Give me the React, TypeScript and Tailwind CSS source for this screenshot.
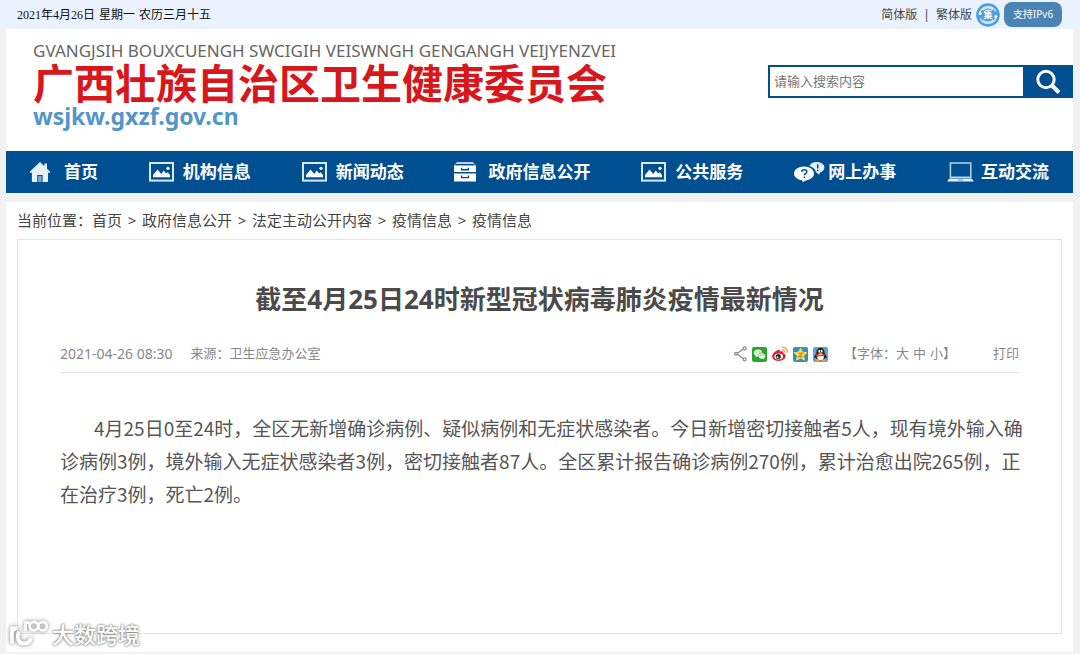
import type { ReactNode } from "react";

function HomeIcon() {
  return (
    <svg width="20" height="20" viewBox="0 0 20 20" aria-hidden="true">
      <path fill="#e6f1fb" d="M10 0 0 9.6v1.2h1.9V20h5.3v-7h5.4v7h5.4v-9.2H20V9.6l-3-2.9V1.6h-2.6v2.6z" />
      <path fill="#7fa9cf" d="M8.2 14h3.4v6H8.2z" />
    </svg>
  );
}

function PictureIcon() {
  return (
    <svg width="25" height="20" viewBox="0 0 25 20" aria-hidden="true">
      <rect x="1" y="1" width="23" height="17.6" fill="none" stroke="#d7e8f7" strokeWidth="2" />
      <path fill="#fff" d="M4 15.200v-2.200l4.600-5.600 3.600 4.600 2.600-3.400 2.200 3 1.600-1.400 2.400 2.800v2.200z" />
      <circle cx="19" cy="6.300" r="1.600" fill="#fff" />
    </svg>
  );
}

function CabinetIcon() {
  return (
    <svg width="22" height="20" viewBox="0 0 22 20" aria-hidden="true">
      <path fill="#b9d3ea" d="M3 0h16l3 3.600H0z" />
      <path fill="#fff" d="M0 3.600h22V10H0zM0 11.400h22V19.400H0z" />
      <path fill="none" stroke="#004f90" strokeWidth="1.200" d="M1.500 2.600h19" />
      <path fill="none" stroke="#004f90" strokeWidth="1.400" d="M7.600 5.800v2h6.800v-2M7.600 13.600v2h6.800v-2" />
    </svg>
  );
}

function ChatIcon() {
  return (
    <svg width="31" height="20" viewBox="0 0 31 20" aria-hidden="true">
      <path fill="#e6f1fb" d="M22.600 0c4.400 0 7.800 2.400 7.800 5.500 0 2.300-1.800 4.100-4.400 5l-.8 2.300-3.200-2.600c-.6-3.300-3.200-5.400-6.600-6.300C16.600 1.600 19.400 0 22.600 0z" />
      <path fill="#fff" d="M10 4.600c5.600 0 10 3 10 7 0 3.500-3.300 6.200-7.900 6.800L8.700 20l-.6-1.700C3.400 17.700 0 15 0 11.600c0-4 4.500-7 10-7z" />
      <path fill="none" stroke="#004f90" strokeWidth="1.500" d="M7.600 9.800c.2-1.500 1.200-2 2.700-2 1.600 0 2.600.8 2.600 2 0 1.500-2.500 1.600-2.500 3.400M10.400 14.400v1.500M23.700 2.200v4.400M23.700 7.700v1.300" />
    </svg>
  );
}

function LaptopIcon() {
  return (
    <svg width="27" height="20" viewBox="0 0 27 20" aria-hidden="true">
      <path fill="none" stroke="#b9d3ea" strokeWidth="1.500" d="M3.400 15.200V1h20.400v14.200z" />
      <path fill="#e6f1fb" d="M2.400 16.400h22.200l2.400 3.200H0z" />
      <path fill="#5f92c0" d="M11 17.400h5l.6 1.200h-6.200z" />
    </svg>
  );
}

const navItems: { label: string; icon: ReactNode }[] = [
  { label: "首页", icon: <HomeIcon /> },
  { label: "机构信息", icon: <PictureIcon /> },
  { label: "新闻动态", icon: <PictureIcon /> },
  { label: "政府信息公开", icon: <CabinetIcon /> },
  { label: "公共服务", icon: <PictureIcon /> },
  { label: "网上办事", icon: <ChatIcon /> },
  { label: "互动交流", icon: <LaptopIcon /> },
];

const crumbs = ["首页", "政府信息公开", "法定主动公开内容", "疫情信息", "疫情信息"];

function CollectionBadge() {
  return (
    <svg width="24" height="24" viewBox="0 0 24 24" aria-label="集约化平台">
      <circle cx="12" cy="12" r="11.800" fill="#4f9ddd" />
      <path fill="none" stroke="#cfe6f8" strokeWidth="1.400" d="M3.800 9.200a8.800 8.800 0 0 1 16-.8M20.200 14.800a8.800 8.800 0 0 1-16 .8M6.600 7.200a7 7 0 0 1 10.400-.4M17.400 16.800a7 7 0 0 1-10.400.4" />
      <circle cx="4.200" cy="10.400" r="1.500" fill="#fff" />
      <circle cx="19.800" cy="13.600" r="1.500" fill="#fff" />
      <text x="12" y="15.400" textAnchor="middle" fontSize="9" fontWeight="700" fill="#fff">集</text>
    </svg>
  );
}

function ShareIcon() {
  return (
    <svg width="13" height="16" viewBox="0 0 13 16" fill="none" stroke="#888" strokeWidth="1.200" aria-hidden="true">
      <path d="M9.600 3 2.600 7.800l7 5" />
      <circle cx="10.600" cy="2.400" r="1.500" fill="#fff" />
      <circle cx="2" cy="7.800" r="1.400" fill="#fff" />
      <circle cx="10.600" cy="13.400" r="1.500" fill="#fff" />
    </svg>
  );
}

function WechatIcon() {
  return (
    <svg width="15" height="15" viewBox="0 0 15 15" aria-hidden="true">
      <rect width="15" height="15" rx="2" fill="#2ba62b" />
      <path fill="#fff" d="M6 2.600c2.300 0 4 1.300 4.100 3-2.500 0-4.200 1.500-4.100 3.600l-1 .1-1.500.9.300-1.400C2.700 8.200 2 7.200 2 6c0-1.900 1.800-3.400 4-3.400z" />
      <path fill="#e9f8e6" d="M9.800 6.200c1.900 0 3.400 1.200 3.400 2.800 0 .9-.5 1.700-1.200 2.200l.3 1.200-1.300-.7c-2.500.5-4.600-.8-4.600-2.700 0-1.600 1.500-2.800 3.400-2.800z" />
      <g fill="#2ba62b"><circle cx="4.700" cy="5" r=".6" /><circle cx="7.300" cy="5" r=".6" /><circle cx="8.700" cy="8.300" r=".5" /><circle cx="11" cy="8.300" r=".5" /></g>
    </svg>
  );
}

function WeiboIcon() {
  return (
    <svg width="16" height="16" viewBox="0 0 16 16" aria-hidden="true">
      <path fill="#d8222b" d="M6 4c1.300-.4 2.300.1 1.900 1.700 2-.8 3.800-.4 3.200 1.600 1.900.5 2.700 1.500 2.500 3-.3 2.700-3.300 4.700-7 4.700-3.800 0-6.400-1.800-6.400-4.400C.2 8 3.400 4.700 6 4z" />
      <ellipse cx="6.700" cy="10.400" rx="4.300" ry="3" fill="#fff" />
      <circle cx="6.300" cy="10.600" r="2.500" fill="#222" />
      <circle cx="5.600" cy="11.200" r=".9" fill="#fff" />
      <path fill="none" stroke="#f2a65a" strokeWidth="1.500" d="M10 1.300c3.300-.6 5.700 2 4.800 5.300M10.300 3.900c1.500-.2 2.500.8 2.200 2.300" />
    </svg>
  );
}

function QzoneIcon() {
  return (
    <svg width="15" height="15" viewBox="0 0 15 15" aria-hidden="true">
      <rect width="15" height="15" rx="2" fill="#3190cc" />
      <path fill="#fddc4a" stroke="#fddc4a" strokeLinejoin="round" d="m7.500 1.200 1.900 4 4.400.5-3.200 3 .9 4.400-4-2.200-4 2.200.9-4.400-3.200-3 4.400-.5z" />
      <path fill="none" stroke="#d9741a" strokeWidth="1.100" d="M5.400 6.300h4L5.600 9.600h4" />
    </svg>
  );
}

function QQIcon() {
  return (
    <svg width="15" height="15" viewBox="0 0 15 15" aria-hidden="true">
      <rect width="15" height="15" rx="2" fill="#5aa5da" />
      <path fill="#1f1f23" d="M7.500.8c2.500 0 4 1.700 4 4.100 0 1 .3 1.600.9 2.500 1 1.300 1.500 2.700 1.200 3.600-.3.500-.8.200-1.400-.4-.3 1.700-2 3-4.700 3s-4.400-1.300-4.700-3c-.6.600-1.100.9-1.400.4-.3-.9.200-2.300 1.200-3.600.6-.9.900-1.500.9-2.500C3.500 2.500 5 .8 7.500.8z" />
      <ellipse cx="7.500" cy="10" rx="3.300" ry="3.200" fill="#fff" />
      <ellipse cx="6.300" cy="4" rx=".9" ry="1.200" fill="#fff" />
      <ellipse cx="8.700" cy="4" rx=".9" ry="1.200" fill="#fff" />
      <path fill="#f8a81b" d="M4.600 5.800c1.800-.7 4-.7 5.800 0-1.200 1.300-4.600 1.300-5.800 0zM2.500 12.600c1.400-.7 3.400-.3 4.300 1.200-1.200.9-3.800.8-4.300-1.200zM12.500 12.600c-1.400-.7-3.400-.3-4.300 1.200 1.200.9 3.800.8 4.300-1.200z" />
      <path fill="#e3342b" d="M3.300 6.800c2.500 1.200 5.900 1.200 8.400 0l.3 1.400c-2.300 1.200-5.400 1.300-7.200.7l-.2 1.700-1.300-.3z" />
    </svg>
  );
}

function Watermark() {
  return (
    <div className="pointer-events-none absolute bottom-1.5 left-2 flex items-end gap-0.5">
      <svg width="42" height="30" viewBox="0 0 42 30" fill="none" className="drop-shadow-[0_0_2px_#777]" aria-hidden="true">
        <g stroke="#fff">
          <path strokeWidth="3.600" d="M4 8.500v17M4 14.500c.6-3 2.600-4.400 5.600-4.400" />
          <path strokeWidth="3.600" d="M11 13.500c-3 7 0 12 5 12 3.800 0 6.200-2.200 7-5.500" />
          <path strokeWidth="2.600" d="M17.500 3.500v9.500M17.500 8c.4-2.600 1.800-3.600 4-3.600" />
          <circle cx="25.800" cy="8.200" r="4.200" strokeWidth="2.600" />
          <circle cx="34.600" cy="8.200" r="4.200" strokeWidth="2.600" />
        </g>
      </svg>
      <span className="text-[22px] leading-7 font-medium text-white [text-shadow:0_0_3px_#777,0_0_2px_#888]">大数跨境</span>
    </div>
  );
}

export default function App() {
  return (
    <div
      lang="zh-CN"
      className="relative flex min-h-screen flex-col bg-[#f1f1f1] pb-0.5 font-['Noto_Sans','Noto_Sans_CJK_SC',sans-serif] text-[#444]"
    >
      <div className="flex h-[29px] items-center justify-between bg-[#eaf2fe] pr-[18px] pl-[17px] text-xs">
        <p className="flex gap-1 font-['Liberation_Serif','Noto_Sans_CJK_SC',serif] text-[#111]">
          <span>2021年4月26日</span>
          <span>星期一</span>
          <span>农历三月十五</span>
        </p>
        <div className="flex items-center">
          <a href="#simplified">简体版</a>
          <span className="px-1.5">|</span>
          <a href="#traditional">繁体版</a>
          <a href="#platform" className="ml-1">
            <CollectionBadge />
          </a>
          <a href="#ipv6" className="ml-1 flex h-[25px] w-[58px] items-center justify-center rounded-lg bg-[#4a84b4] text-[10px] text-white">
            支持IPv6
          </a>
        </div>
      </div>

      <header className="mr-[7px] ml-1.5 flex justify-between bg-white pb-[27px]">
        <a href="#home" className="block pt-3 pl-[27px]">
          <span className="block text-[17px] leading-5 text-[#666]">GVANGJSIH BOUXCUENGH SWCIGIH VEISWNGH GENGANGH VEIJYENZVEI</span>
          <span className="block font-['Liberation_Sans','Noto_Sans_CJK_SC',sans-serif] text-[41px] leading-[48px] font-bold text-[#d7171b]">
            广西壮族自治区卫生健康委员会
          </span>
          <span className="block text-[23px] leading-[15px] font-bold text-[#5594c6]">wsjkw.gxzf.gov.cn</span>
        </a>
        <form className="mt-9 flex h-[33px] w-[305px]" onSubmit={(e) => e.preventDefault()}>
          <input
            type="search"
            aria-label="搜索"
            placeholder="请输入搜索内容"
            className="min-w-0 flex-1 border-2 border-r-0 border-[#004f90] bg-white px-1 text-[13px] outline-none placeholder:text-[#777]"
          />
          <button type="submit" aria-label="搜索" className="flex w-[50px] items-center justify-center bg-[#004f90]">
            <svg width="26" height="26" viewBox="0 0 26 26" fill="none" stroke="#fff" aria-hidden="true">
              <circle cx="11" cy="10.500" r="8.200" strokeWidth="3" />
              <path d="m17 16.500 7 7" strokeWidth="4" />
            </svg>
          </button>
        </form>
      </header>

      <nav className="mr-[7px] ml-1.5 flex h-[42px] items-center justify-between bg-[#004f90] px-6">
        {navItems.map((item) => (
          <a key={item.label} href="#nav" className="flex items-center text-[17px] font-bold text-white">
            <span className="w-[34px]">{item.icon}</span>
            {item.label}
          </a>
        ))}
      </nav>

      <main className="mt-[9px] mr-[7px] ml-1.5 flex flex-1 flex-col bg-white px-[11px] pb-[18px]">
        <div className="flex h-[37px] items-center text-[15px] text-[#444]">
          <span>当前位置：</span>
          {crumbs.map((crumb, i) => (
            <span key={i} className="flex">
              {i > 0 && <span className="w-5 text-center">&gt;</span>}
              <a href="#crumb">{crumb}</a>
            </span>
          ))}
        </div>

        <article className="flex-1 border border-[#e4e4e4] px-[42px] pt-[41px]">
          <h1 className="text-center text-[26px] leading-9 font-bold text-[#4a4a4a]">截至4月25日24时新型冠状病毒肺炎疫情最新情况</h1>
          <div className="mt-5 flex h-9 items-center justify-between border-b border-[#e4e4e4] pb-px text-[13px] text-[#888]">
            <div className="flex items-center gap-[18px]">
              <time className="text-sm">2021-04-26 08:30</time>
              <span>来源：卫生应急办公室</span>
            </div>
            <div className="flex items-center">
              <div className="flex items-center gap-[5px]">
                <a href="#share" aria-label="分享"><ShareIcon /></a>
                <a href="#wechat" aria-label="微信"><WechatIcon /></a>
                <a href="#weibo" aria-label="微博"><WeiboIcon /></a>
                <a href="#qzone" aria-label="QQ空间"><QzoneIcon /></a>
                <a href="#qq" aria-label="QQ"><QQIcon /></a>
              </div>
              <div className="ml-4 flex gap-1">
                <span>【字体：<button type="button">大</button></span>
                <button type="button">中</button>
                <span><button type="button">小</button>】</span>
              </div>
              <button type="button" className="ml-[37px]">打印</button>
            </div>
          </div>
          <p className="-mr-2 mt-[38px] indent-[34px] font-['Noto_Sans_CJK_SC',sans-serif] text-[19px] leading-[33px] text-[#555]">
            4月25日0至24时，全区无新增确诊病例、疑似病例和无症状感染者。今日新增密切接触者5人，现有境外输入确诊病例3例，境外输入无症状感染者3例，密切接触者87人。全区累计报告确诊病例270例，累计治愈出院265例，正在治疗3例，死亡2例。
          </p>
        </article>
      </main>
      <Watermark />
    </div>
  );
}
